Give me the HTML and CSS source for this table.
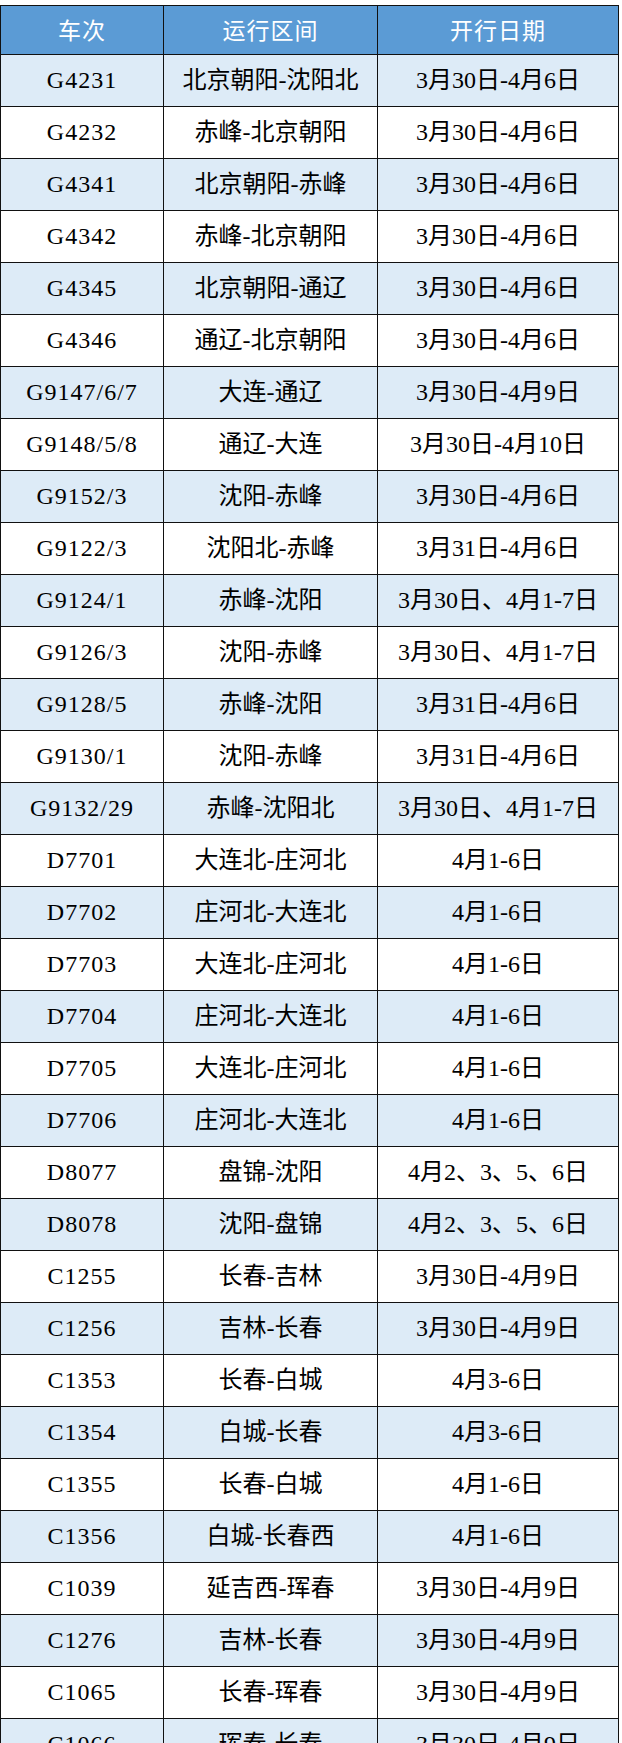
FILE: index.html
```html
<!DOCTYPE html>
<html lang="zh-CN">
<head>
<meta charset="utf-8">
<title>列车开行表</title>
<link rel="stylesheet" href="styles.css">
</head>
<body>
<table class="schedule">
  <colgroup>
    <col class="c-train">
    <col class="c-route">
    <col class="c-date">
  </colgroup>
  <thead>
    <tr><th>车次</th><th>运行区间</th><th>开行日期</th></tr>
  </thead>
  <tbody>
    <tr><td>G4231</td><td>北京朝阳-沈阳北</td><td>3月30日-4月6日</td></tr>
    <tr><td>G4232</td><td>赤峰-北京朝阳</td><td>3月30日-4月6日</td></tr>
    <tr><td>G4341</td><td>北京朝阳-赤峰</td><td>3月30日-4月6日</td></tr>
    <tr><td>G4342</td><td>赤峰-北京朝阳</td><td>3月30日-4月6日</td></tr>
    <tr><td>G4345</td><td>北京朝阳-通辽</td><td>3月30日-4月6日</td></tr>
    <tr><td>G4346</td><td>通辽-北京朝阳</td><td>3月30日-4月6日</td></tr>
    <tr><td>G9147/6/7</td><td>大连-通辽</td><td>3月30日-4月9日</td></tr>
    <tr><td>G9148/5/8</td><td>通辽-大连</td><td>3月30日-4月10日</td></tr>
    <tr><td>G9152/3</td><td>沈阳-赤峰</td><td>3月30日-4月6日</td></tr>
    <tr><td>G9122/3</td><td>沈阳北-赤峰</td><td>3月31日-4月6日</td></tr>
    <tr><td>G9124/1</td><td>赤峰-沈阳</td><td>3月30日、4月1-7日</td></tr>
    <tr><td>G9126/3</td><td>沈阳-赤峰</td><td>3月30日、4月1-7日</td></tr>
    <tr><td>G9128/5</td><td>赤峰-沈阳</td><td>3月31日-4月6日</td></tr>
    <tr><td>G9130/1</td><td>沈阳-赤峰</td><td>3月31日-4月6日</td></tr>
    <tr><td>G9132/29</td><td>赤峰-沈阳北</td><td>3月30日、4月1-7日</td></tr>
    <tr><td>D7701</td><td>大连北-庄河北</td><td>4月1-6日</td></tr>
    <tr><td>D7702</td><td>庄河北-大连北</td><td>4月1-6日</td></tr>
    <tr><td>D7703</td><td>大连北-庄河北</td><td>4月1-6日</td></tr>
    <tr><td>D7704</td><td>庄河北-大连北</td><td>4月1-6日</td></tr>
    <tr><td>D7705</td><td>大连北-庄河北</td><td>4月1-6日</td></tr>
    <tr><td>D7706</td><td>庄河北-大连北</td><td>4月1-6日</td></tr>
    <tr><td>D8077</td><td>盘锦-沈阳</td><td>4月2、3、5、6日</td></tr>
    <tr><td>D8078</td><td>沈阳-盘锦</td><td>4月2、3、5、6日</td></tr>
    <tr><td>C1255</td><td>长春-吉林</td><td>3月30日-4月9日</td></tr>
    <tr><td>C1256</td><td>吉林-长春</td><td>3月30日-4月9日</td></tr>
    <tr><td>C1353</td><td>长春-白城</td><td>4月3-6日</td></tr>
    <tr><td>C1354</td><td>白城-长春</td><td>4月3-6日</td></tr>
    <tr><td>C1355</td><td>长春-白城</td><td>4月1-6日</td></tr>
    <tr><td>C1356</td><td>白城-长春西</td><td>4月1-6日</td></tr>
    <tr><td>C1039</td><td>延吉西-珲春</td><td>3月30日-4月9日</td></tr>
    <tr><td>C1276</td><td>吉林-长春</td><td>3月30日-4月9日</td></tr>
    <tr><td>C1065</td><td>长春-珲春</td><td>3月30日-4月9日</td></tr>
    <tr><td>C1066</td><td>珲春-长春</td><td>3月30日-4月9日</td></tr>
  </tbody>
</table>
</body>
</html>
```

FILE: styles.css
```css
html, body {
  margin: 0;
  padding: 0;
  background: #ffffff;
}

body {
  padding-top: 5px;
  height: 1743px;
  overflow: hidden;
}

.schedule {
  border-collapse: collapse;
  width: 618px;
  table-layout: fixed;
  font-family: "Liberation Serif", "Noto Sans CJK SC", serif;
  font-size: 24px;
  color: #000000;
}

.c-train { width: 163px; }
.c-route { width: 214px; }
.c-date { width: 241px; }

.schedule th,
.schedule td {
  border: 1px solid #111111;
  padding: 0;
  text-align: center;
  vertical-align: middle;
  white-space: nowrap;
  line-height: 1.2;
}

.schedule th {
  height: 48px;
  background: #5b9bd5;
  color: #ffffff;
  font-weight: normal;
  font-size: 23px;
  letter-spacing: 1px;
  font-family: "Noto Sans CJK SC", sans-serif;
}

.schedule td {
  height: 51px;
}

.schedule td:first-child {
  letter-spacing: 1px;
}

.schedule tbody tr:nth-child(odd) td {
  background: #ddebf7;
}

.schedule tbody tr:nth-child(even) td {
  background: #ffffff;
}
```
